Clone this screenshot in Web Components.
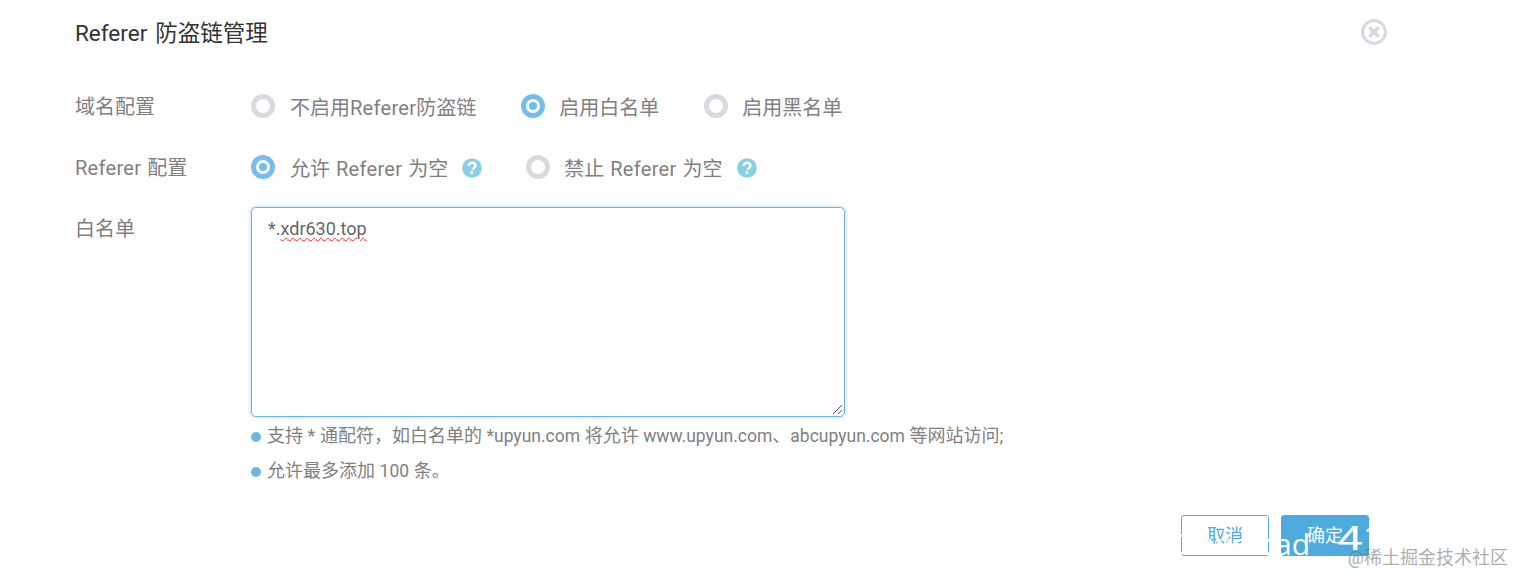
<!DOCTYPE html>
<html>
<head>
<meta charset="utf-8">
<title>Referer 防盗链管理</title>
<style>
  html, body { margin: 0; height: 100%; background: #fff; overflow: hidden; }
  body { font-family: Roboto, "Noto Sans CJK SC", sans-serif; }
</style>
</head>
<body>
<referer-dialog></referer-dialog>

<script>
class RadioOption extends HTMLElement {
    connectedCallback() {
        const on = this.hasAttribute('checked');
        this.attachShadow({ mode: 'open' });
        this.shadowRoot.innerHTML = `
            <style>
                :host { display: inline-flex; align-items: center; gap: 14px; color: #808080; font-size: 20px; line-height: 26px; white-space: nowrap; word-spacing: 1px; }
                :host(.first) { gap: 15px; }
                i { width: 14px; height: 14px; border-radius: 50%; border: 5.5px solid ${on ? '#74bdec' : '#d7dbe0'}; background: #fff; position: relative; margin-top: -2px; }
                i.on::after { content: ''; position: absolute; left: 3px; top: 3px; width: 8px; height: 8px; border-radius: 50%; background: #74bdec; }
                span { position: relative; top: 1px; }
            </style>
            <i class="${on ? 'on' : ''}"></i><span><slot></slot></span>
        `;
    }
}

class HelpIcon extends HTMLElement {
    connectedCallback() {
        this.attachShadow({ mode: 'open' });
        this.shadowRoot.innerHTML = `
            <style>
                :host { display: inline-flex; width: 20px; height: 20px; }
            </style>
            <svg width="20" height="20" viewBox="0 0 20 20">
                <circle cx="10" cy="10" r="9.800" fill="#8acfe8"/>
                <path d="M6.600 8c0-2.100 1.500-3.300 3.500-3.300s3.300 1.200 3.300 2.900c0 1.300-.8 2-1.700 2.600-.7.5-.9.8-.9 1.500" fill="none" stroke="#fff" stroke-width="2.500"/>
                <rect x="8.500" y="13.200" width="2.600" height="2.600" fill="#fff"/>
            </svg>
        `;
    }
}

class CloseIcon extends HTMLElement {
    connectedCallback() {
        this.attachShadow({ mode: 'open' });
        this.shadowRoot.innerHTML = `
            <style>
                :host { display: inline-flex; width: 26px; height: 26px; }
            </style>
            <svg width="26" height="26" viewBox="0 0 26 26">
                <circle cx="13" cy="13" r="11.400" fill="none" stroke="#d5dae0" stroke-width="3"/>
                <path d="M9.200 9.200l7.600 7.600M16.800 9.200l-7.600 7.600" stroke="#d5dae0" stroke-width="3.600" stroke-linecap="round"/>
            </svg>
        `;
    }
}

class FormRow extends HTMLElement {
    connectedCallback() {
        this.attachShadow({ mode: 'open' });
        this.shadowRoot.innerHTML = `
            <style>
                :host { display: flex; align-items: flex-start; }
                .label { width: 176px; flex: none; color: #808080; font-size: 20px; line-height: 26px; white-space: nowrap; word-spacing: 1px; }
                .body { flex: 1; display: flex; align-items: center; min-height: 26px; }
            </style>
            <div class="label"><slot name="label"></slot></div>
            <div class="body"><slot></slot></div>
        `;
    }
}

class HintLine extends HTMLElement {
    connectedCallback() {
        this.attachShadow({ mode: 'open' });
        this.shadowRoot.innerHTML = `
            <style>
                :host { display: flex; align-items: center; gap: 6px; color: #808080; font-size: 18px; line-height: 24px; white-space: nowrap; word-spacing: .1px; }
                i { width: 10px; height: 10px; border-radius: 50%; background: #6db6e0; margin-top: 2px; }
            </style>
            <i></i><span><slot></slot></span>
        `;
    }
}

class RefererDialog extends HTMLElement {
    connectedCallback() {
        this.attachShadow({ mode: 'open' });
        this.shadowRoot.innerHTML = `
            <style>
                :host { display: block; position: relative; width: 1515px; height: 575px; overflow: hidden; background: #fff; }
                .wrap { padding: 17px 128px 0 75px; display: flex; flex-direction: column; }
                header { display: flex; justify-content: space-between; align-items: center; height: 30px; color: #333; font-size: 22.500px; line-height: 30px; }
                header span { position: relative; top: 1px; word-spacing: 2.500px; }
                .rows { margin-top: 47px; display: flex; flex-direction: column; }
                form-row + form-row { margin-top: 35px; }
                .next { margin-left: 44px; }
                .wide { margin-left: 45px; }
                .help { margin-left: 14px; }
                .field { margin-top: -9px; }
                .ref { letter-spacing: .3px; }
                .lat { font-size: 17.500px; }
                .box { width: 594px; height: 210px; box-sizing: border-box; border: 1px solid #6cb2e8; border-radius: 5px; box-shadow: 0 0 4px rgba(108,178,232,.55); padding: 9px 16px; color: #666; font-size: 18px; line-height: 24px; position: relative; background: #fff; }
                .squiggle { text-decoration: underline wavy #f0272a 1.200px; text-underline-offset: 2px; }
                .grip { position: absolute; right: 1px; bottom: 1px; }
                .hints { margin-top: 7px; display: flex; flex-direction: column; gap: 11px; }
                footer { position: absolute; left: 1181px; top: 515px; display: flex; gap: 12px; }
                button { width: 88px; height: 41px; box-sizing: border-box; border: 1px solid #4dabdd; border-radius: 3px; font: 18px/36px Roboto, "Noto Sans CJK SC", sans-serif; padding: 0; }
                .cancel { background: #fff; color: #4dabdd; }
                .ok { background: #4dabdd; color: #fff; }
                .overlay { position: absolute; left: 1168px; top: 518px; width: 201px; height: 38px; overflow: hidden; color: #fff; white-space: nowrap; display: flex; }
                .word { font: 30px/44px "Open Sans", sans-serif; position: relative; top: 4px; }
                .num { font: 34px/44px Roboto, sans-serif; margin-left: 27px; position: relative; top: -2px; transform: scaleX(1.35); transform-origin: left; }
                .mark { position: absolute; right: 7px; bottom: 5px; color: rgba(120,120,120,.62); font-size: 18px; line-height: 24px; white-space: nowrap; }
            </style>
            <div class="wrap">
                <header><span>Referer 防盗链管理</span><close-icon></close-icon></header>
                <div class="rows">
                    <form-row>
                        <span slot="label">域名配置</span>
                        <radio-option class="first">不启用<span class="ref">Referer</span>防盗链</radio-option>
                        <radio-option class="wide" checked>启用白名单</radio-option>
                        <radio-option class="wide">启用黑名单</radio-option>
                    </form-row>
                    <form-row>
                        <span slot="label"><span class="ref">Referer</span> 配置</span>
                        <radio-option class="first" checked>允许 <span class="ref">Referer</span> 为空</radio-option>
                        <help-icon class="help"></help-icon>
                        <radio-option class="next">禁止 <span class="ref">Referer</span> 为空</radio-option>
                        <help-icon class="help"></help-icon>
                    </form-row>
                    <form-row>
                        <span slot="label">白名单</span>
                        <div class="field">
                            <div class="box">*.<span class="squiggle">xdr630.top</span>
                                <svg class="grip" width="12" height="12" viewBox="0 0 12 12"><path d="M11 2L2 11M11 7L7 11" stroke="#555" stroke-width="1"/></svg>
                            </div>
                            <div class="hints">
                                <hint-line>支持 * 通配符，如白名单的 <span class="lat">*upyun.com</span> 将允许 <span class="lat">www.upyun.com</span>、<span class="lat">abcupyun.com</span> 等网站访问;</hint-line>
                                <hint-line>允许最多添加 <span class="lat">100</span> 条。</hint-line>
                            </div>
                        </div>
                    </form-row>
                </div>
            </div>
            <footer>
                <button class="cancel">取消</button>
                <button class="ok">确定</button>
            </footer>
            <div class="overlay"><span class="word">Download</span><span class="num">41</span></div>
            <div class="mark">@稀土掘金技术社区</div>
        `;
    }
}

customElements.define('radio-option', RadioOption);
customElements.define('help-icon', HelpIcon);
customElements.define('close-icon', CloseIcon);
customElements.define('form-row', FormRow);
customElements.define('hint-line', HintLine);
customElements.define('referer-dialog', RefererDialog);
</script>
</body>
</html>
